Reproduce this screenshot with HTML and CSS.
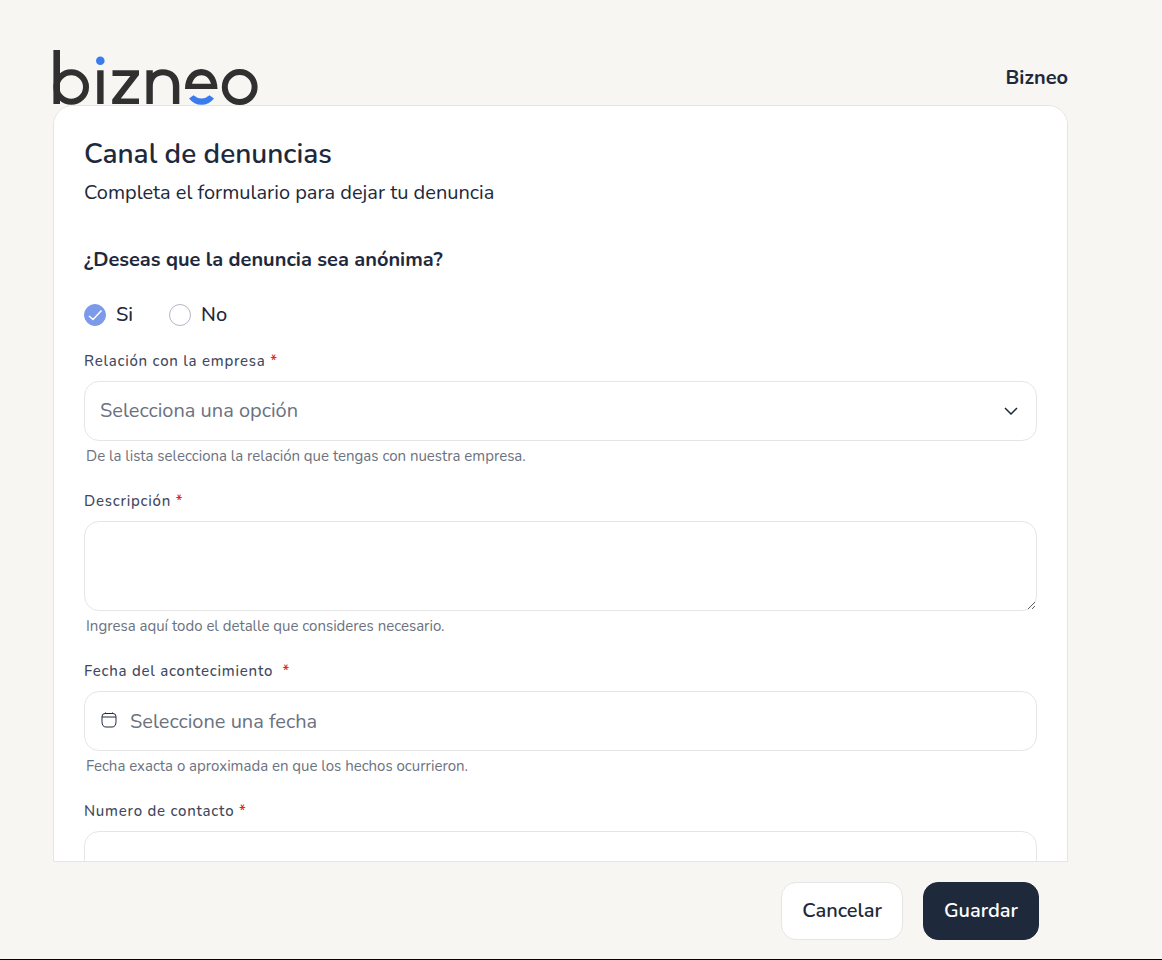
FILE: index.html
```
<!DOCTYPE html>
<html lang="es">
<head>
  <meta charset="UTF-8">
  <meta name="viewport" content="width=device-width, initial-scale=1">
  <title>Canal de denuncias</title>
  <link rel="stylesheet" href="styles.css">
</head>
<body>

  <div class="page">

    <header class="header">
      <svg class="logo" viewBox="0 0 205 55" role="img" aria-label="bizneo">
        <!-- b -->
        <rect x="0.4" y="0" width="6.6" height="54"/>
        <circle class="line" cx="18.2" cy="37" r="14.8"/>
        <!-- i -->
        <rect x="44.2" y="20.3" width="6.4" height="33.7"/>
        <circle class="blue" cx="47.3" cy="10.8" r="4.3"/>
        <!-- z -->
        <path d="M59.5 20.3H86V25L67.8 48.4H86V54H59.2V49.5L77.3 26H59.5Z"/>
        <!-- n -->
        <path d="M93.4 20.3H99.8V23Q103.5 19.2 109.5 19.2C120 19.2 126.3 25.5 126.3 35.5V54H119.9V36.5C119.9 29 116 25.2 110 25.2C104 25.2 99.8 29 99.8 36.5V54H93.4Z"/>
        <!-- e -->
        <path fill-rule="evenodd" d="M132 39C132 27.5 138.5 19 148.2 19C158 19 164.5 27.5 164.5 39ZM139 33.7H158C156.5 28.5 153 25.2 148.5 25.2C144 25.2 140.5 28.5 139 33.7Z"/>
        <path class="blue" d="M136 48.5L140.5 45.2Q148.5 52 156.5 45.2L161 48.5Q156 54.8 148.5 54.8Q141 54.8 136 48.5Z"/>
        <!-- o -->
        <circle class="line" cx="186.7" cy="37" r="14.9"/>
      </svg>
      <span class="company">Bizneo</span>
    </header>

    <form class="card" id="denuncia">
      <h1>Canal de denuncias</h1>
      <p class="intro">Completa el formulario para dejar tu denuncia</p>

      <fieldset class="anonymous">
        <legend>¿Deseas que la denuncia sea anónima?</legend>
        <div class="options">
          <label class="option">
            <input type="radio" name="anonima" value="si" checked>
            <svg class="check" viewBox="0 0 22 22" aria-hidden="true"><path d="M5 12L9 15.5L17.5 6.5"/></svg>
            Si
          </label>
          <label class="option">
            <input type="radio" name="anonima" value="no">
            <svg class="check" viewBox="0 0 22 22" aria-hidden="true"><path d="M5 12L9 15.5L17.5 6.5"/></svg>
            No
          </label>
        </div>
      </fieldset>

      <div class="field">
        <label for="relacion">Relación con la empresa <span class="required">*</span></label>
        <div class="control">
          <select id="relacion" class="input" required>
            <option value="">Selecciona una opción</option>
            <option>Empleado</option>
            <option>Proveedor</option>
            <option>Cliente</option>
          </select>
          <svg class="chevron" viewBox="0 0 14 8" aria-hidden="true"><path d="M1 1L7 7L13 1"/></svg>
        </div>
        <p class="help">De la lista selecciona la relación que tengas con nuestra empresa.</p>
      </div>

      <div class="field">
        <label for="descripcion">Descripción <span class="required">*</span></label>
        <textarea id="descripcion" class="input" required></textarea>
        <p class="help">Ingresa aquí todo el detalle que consideres necesario.</p>
      </div>

      <div class="field">
        <label for="fecha">Fecha del acontecimiento &nbsp;<span class="required">*</span></label>
        <div class="control">
          <svg class="calendar" viewBox="0 0 16 16" aria-hidden="true"><path d="M4 1.5H12Q15 1.5 15 4.5V9.5Q15 15 11 15H5Q1 15 1 9.5V4.5Q1 1.5 4 1.5ZM1 5H15M4.5 0.5V2M11.5 0.5V2"/></svg>
          <input type="text" id="fecha" class="input with-icon" placeholder="Seleccione una fecha" required>
        </div>
        <p class="help">Fecha exacta o aproximada en que los hechos ocurrieron.</p>
      </div>

      <div class="field">
        <label for="telefono">Numero de contacto <span class="required">*</span></label>
        <input type="tel" id="telefono" class="input" required>
      </div>
    </form>

    <footer class="actions">
      <button type="button" class="btn">Cancelar</button>
      <button type="submit" form="denuncia" class="btn btn-primary">Guardar</button>
    </footer>

  </div>

</body>
</html>
```
FILE: styles.css
```
* {
  box-sizing: border-box;
}

body {
  margin: 0;
  background-color: #f7f6f2;
  color: #1e293b;
  font-family: Nunito, Lato, "Open Sans", sans-serif;
  font-size: 20px;
  line-height: 28px;
}

.page {
  display: flex;
  flex-direction: column;
  height: 100vh;
  padding: 50px 94px 0 53px;
  border-bottom: 1px solid #000;
}

.header {
  display: flex;
  justify-content: space-between;
  align-items: center;
}

.logo {
  width: 205px;
  height: 55px;
  fill: #303030;
}

.logo .line {
  fill: none;
  stroke: #303030;
  stroke-width: 6;
}

.logo .blue {
  fill: #3b7bf0;
}

.company {
  font-weight: 700;
}

.card {
  flex: 1;
  min-height: 0;
  padding: 30px;
  overflow-y: auto;
  scrollbar-width: none;
  background-color: #fff;
  border: 1px solid #e5e5e5;
  border-radius: 20px 20px 0 0;
}

h1 {
  margin: 0;
  font-size: 28px;
  line-height: 36px;
  font-weight: 650;
}

.intro {
  margin: 7px 0 39px;
}

.anonymous {
  margin: 0 0 20px;
  padding: 0;
  border: none;
}

.anonymous legend {
  padding: 0;
  font-weight: 700;
}

.options {
  display: flex;
  gap: 36px;
  padding-top: 27px;
}

.option {
  display: grid;
  grid-template-columns: 22px auto;
  column-gap: 10px;
  align-items: center;
  font-weight: 500;
}

.option input,
.check {
  grid-area: 1 / 1;
  width: 22px;
  height: 22px;
  margin: 0;
}

.option input {
  appearance: none;
  border: 1px solid #b4b7c5;
  border-radius: 50%;
}

.option input:checked {
  background-color: #7c9aea;
  border-color: #7c9aea;
}

.check {
  fill: none;
  stroke: #fff;
  stroke-width: 1.5;
  pointer-events: none;
}

.field {
  margin-bottom: 21px;
}

.field label {
  display: block;
  margin-bottom: 8px;
  font-size: 15px;
  line-height: 24px;
  letter-spacing: 0.05em;
  color: #3f4960;
  font-weight: 500;
}

.required {
  color: #dc2626;
}

.control {
  position: relative;
}

.input {
  display: block;
  width: 100%;
  height: 60px;
  padding: 0 15px;
  background-color: #fff;
  border: 1px solid #e5e5e5;
  border-radius: 15px;
  color: #6b7280;
  font: inherit;
}

.input::placeholder {
  color: #6b7280;
}

select.input {
  appearance: none;
}

textarea.input {
  height: 90px;
  padding: 15px;
}

.input.with-icon {
  padding-left: 45px;
}

.chevron,
.calendar {
  position: absolute;
  fill: none;
  stroke: #1e293b;
  pointer-events: none;
}

.chevron {
  top: 26px;
  right: 19px;
  width: 14px;
  height: 8px;
  stroke-width: 1.5;
}

.calendar {
  top: 21px;
  left: 17px;
  width: 16px;
  height: 16px;
}

.help {
  margin: 3px 2px 0;
  font-size: 15px;
  line-height: 24px;
  color: #6b7280;
}

.actions {
  display: flex;
  justify-content: flex-end;
  gap: 20px;
  padding: 20px 29px 19px 0;
}

.btn {
  height: 58px;
  padding: 0 20px;
  background-color: #fff;
  border: 1px solid #e5e5e5;
  border-radius: 15px;
  color: #1e293b;
  font: inherit;
  font-weight: 600;
  cursor: pointer;
}

.btn-primary {
  background-color: #1e293b;
  border-color: #1e293b;
  color: #fff;
}
```
